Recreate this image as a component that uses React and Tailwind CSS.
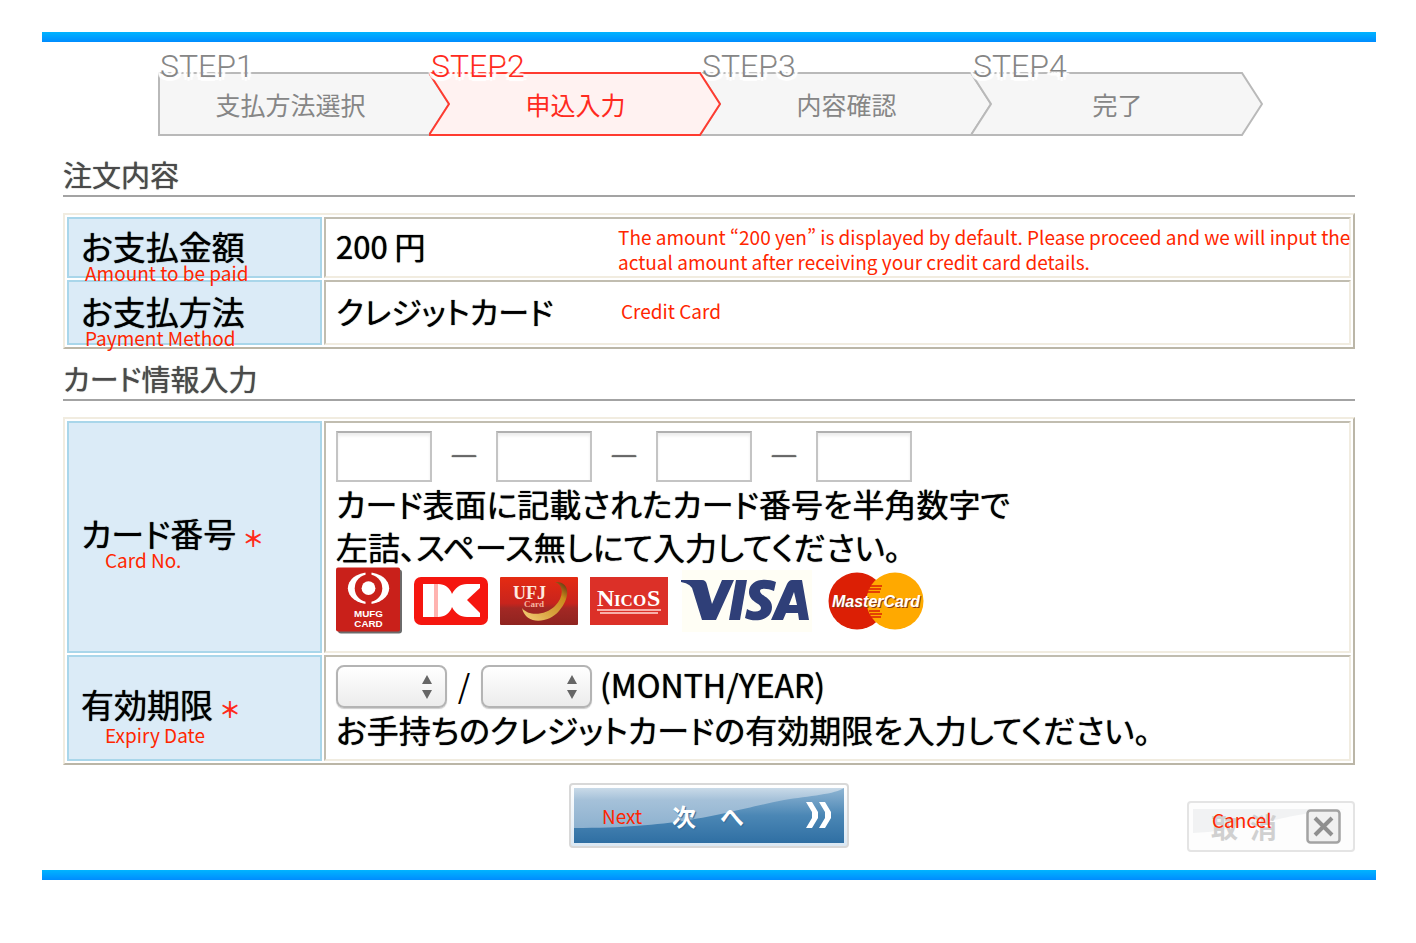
import React from 'react';
import clsx from 'clsx';

const STEPS = [
    { id: 1, label: '支払方法選択' },
    { id: 2, label: '申込入力', active: true },
    { id: 3, label: '内容確認' },
    { id: 4, label: '完了' }
];

const Step = ({ step }) => {
    const shape = step.id === 1
        ? 'M1 1H271L291 32L271 63H1Z'
        : 'M0 1H271L291 32L271 63H0L20 32Z';

    return (
        <li
            aria-current={step.active ? 'step' : undefined}
            className={clsx('relative w-[271px] h-[84px] shrink-0', step.active ? 'z-10 text-[#ff2a20]' : 'text-[#868686]')}
        >
            <svg className="absolute left-0 bottom-0 w-[292px] h-16" viewBox="0 0 292 64" fill="none">
                <path
                    d={shape}
                    fill={step.active ? '#fff2f1' : '#f6f6f6'}
                    stroke={step.active ? '#ff3b30' : '#b9b9b9'}
                    strokeWidth="2"
                />
            </svg>
            <div className="relative flex flex-col h-full">
                <span className="pl-0.5 h-[34px] font-[Roboto,sans-serif] font-light text-[32px] leading-7 [text-shadow:0_4px_1px_#fff,3px_3px_1px_#fff,-3px_3px_1px_#fff,4px_0_1px_#fff,-4px_0_1px_#fff,0_-2px_1px_#fff]">
                    STEP{step.id}
                </span>
                <span className={clsx('text-center text-[25px] leading-9', step.id === 1 ? 'pr-1.5' : 'pl-[22px]')}>
                    {step.label}
                </span>
            </div>
        </li>
    );
};

const SectionTitle = ({ children }) => (
    <h2 className="h-[43px] border-b-2 border-[#a3a3a3] text-[29px] leading-10 text-[#4a4a4a] [text-shadow:0_0_1px_#4a4a4a] [font-feature-settings:'palt']">
        {children}
    </h2>
);

const Note = ({ className, children }) => (
    <span className={clsx('text-[19px] leading-[25px] text-[#ff2600] text-shadow-none', className)}>{children}</span>
);

const FormTable = ({ children }) => (
    <table className="mt-4 w-full table-fixed border-separate border-spacing-[2px] border-2 border-t-[#f1ece0] border-l-[#f1ece0] border-r-[#bbb6a7] border-b-[#bbb6a7] text-black [text-shadow:0_0_1px_#000] [font-feature-settings:'palt']">
        <tbody>{children}</tbody>
    </table>
);

const Row = ({ label, note, noteClass, required, height, children }) => (
    <tr className={height}>
        <th scope="row" className="w-[255px] border-2 border-[#a9d6ea] bg-[#dbebf7] pl-3 pb-1 text-left align-middle text-[33px] font-normal">
            <div className="relative leading-9 whitespace-nowrap">
                {label}
                {required && <span className="ml-2 text-[22px] text-[#ff2a1a] font-bold text-shadow-none">＊</span>}
                <Note className={clsx('absolute whitespace-nowrap', noteClass)}>{note}</Note>
            </div>
        </th>
        <td className="border-2 border-t-[#c1bdb0] border-l-[#c1bdb0] border-r-[#f1ece0] border-b-[#f1ece0] pl-2.5 align-middle text-[32px]">
            {children}
        </td>
    </tr>
);

const DateSelect = ({ label, options }) => (
    <span className="relative inline-block">
        <select
            aria-label={label}
            defaultValue=""
            className="block w-[111px] h-[43px] appearance-none rounded-lg border-2 border-[#b4b4b4] bg-linear-to-b from-white to-[#ececec] px-3 text-xl shadow-[0_1px_1px_#ccc]"
        >
            <option value=""></option>
            {options.map((o) => <option key={o}>{o}</option>)}
        </select>
        <svg className="pointer-events-none absolute right-3.5 top-2.5 w-3 h-6" viewBox="0 0 12 24" fill="#666">
            <path d="M6 0L11 9H1ZM6 24L11 15H1Z" />
        </svg>
    </span>
);

const CardLogos = () => (
    <div className="flex items-center gap-3 h-[66px] text-shadow-none">
        <svg className="w-[66px] h-[67px]" viewBox="0 0 67 67" role="img" aria-label="MUFG CARD">
            <rect x="2" y="2" width="65" height="65" rx="3" fill="#6b6b6b" />
            <rect width="65" height="65" rx="2" fill="#c9201a" />
            <ellipse cx="33" cy="21" rx="21" ry="16" fill="#fff" />
            <circle cx="33" cy="21" r="14" fill="#c9201a" />
            <path d="M30 4h6v4h-6zM30 34h6v4h-6z" fill="#c9201a" />
            <circle cx="33" cy="21" r="7" fill="#fff" />
            <text x="33" y="50" textAnchor="middle" fill="#fff" fontFamily="Liberation Sans" fontWeight="bold" fontSize="10">MUFG</text>
            <text x="33" y="60" textAnchor="middle" fill="#fff" fontFamily="Liberation Sans" fontWeight="bold" fontSize="10">CARD</text>
        </svg>
        <svg className="w-[74px] h-12" viewBox="0 0 74 48" role="img" aria-label="DC">
            <rect width="74" height="48" rx="7" fill="#f5160f" />
            <path d="M9 7H20V40H9Z" fill="#fff" />
            <path d="M20 7H24V40H20Z" fill="#ffb3b0" />
            <path d="M24 7C31 7 36 11 38 17C41 11 46 7 53 7H66V40H53C46 40 41 36 38 30C36 36 31 40 24 40Z" fill="#fff" />
            <path d="M67 10L53 23L67 37Z" fill="#f5160f" />
        </svg>
        <svg className="w-[78px] h-12" viewBox="0 0 78 48" role="img" aria-label="UFJ Card">
            <defs>
                <linearGradient id="ufj" x2="0" y2="1">
                    <stop offset="0" stopColor="#e52b12" />
                    <stop offset=".55" stopColor="#c8241d" />
                    <stop offset=".65" stopColor="#a32824" />
                    <stop offset="1" stopColor="#8f2420" />
                </linearGradient>
                <linearGradient id="ufjGold" x1="0" x2="1" y1="1" y2="0">
                    <stop offset="0" stopColor="#f6d27c" />
                    <stop offset=".4" stopColor="#d9a441" />
                    <stop offset=".75" stopColor="#c98a1c" />
                    <stop offset="1" stopColor="#4f2510" />
                </linearGradient>
            </defs>
            <rect width="78" height="48" rx="1" fill="url(#ufj)" />
            <path d="M22 31C26 49 49 46 59 34C71 20 70 4 55 5C64 8 64 20 55 29C46 38 29 40 22 31Z" fill="url(#ufjGold)" />
            <text x="13" y="22" fill="#ffe9df" fontFamily="Liberation Serif" fontWeight="bold" fontSize="18">UFJ</text>
            <text x="24" y="30" fill="#f5b5a0" fontFamily="Liberation Serif" fontWeight="bold" fontSize="9">Card</text>
        </svg>
        <svg className="w-[78px] h-12" viewBox="0 0 78 48" role="img" aria-label="NICOS">
            <rect width="78" height="48" fill="#dc3028" />
            <text x="7" y="29" fill="#fff" fontFamily="Liberation Serif" fontWeight="bold" fontSize="24">N</text>
            <text x="24" y="29" fill="#fff" fontFamily="Liberation Serif" fontWeight="bold" fontSize="17">ICO</text>
            <text x="57" y="29" fill="#fff" fontFamily="Liberation Serif" fontWeight="bold" fontSize="24">S</text>
            <path d="M7 33H71M10 36H68" stroke="#ffd9d5" strokeWidth="1.5" />
        </svg>
        <svg className="w-[132px] h-[62px]" viewBox="0 0 132 62" role="img" aria-label="VISA">
            <rect x="2" width="130" height="62" fill="#fffef5" />
            <g fill="#2f3f78">
                <path d="M1 10H22Q26 10 27 15L32 34L42 10H54L36 50H22L13 21Q12 14 1 12Z" />
                <path d="M56 10H67L60 50H49Z" />
                <path d="M96 12L94 21C87 18 80 18 80 21C80 26 92 27 92 37C92 50 76 53 65 48L67 39C74 43 81 42 81 38C81 33 69 32 69 22C69 10 84 7 96 12Z" />
                <path fillRule="evenodd" d="M112 10H122L129 50H119L118 43H106L103 50H91L107 14Q109 10 112 10ZM114 22L109 35H117Z" />
            </g>
        </svg>
        <svg className="ml-1 w-24 h-[58px]" viewBox="0 0 96 58" role="img" aria-label="MasterCard">
            <circle cx="29" cy="29" r="28.5" fill="#dc1f05" />
            <circle cx="67" cy="29" r="28.5" fill="#ffa900" />
            <path d="M42 14H54M41 17H53M39 20H52M42 42H54M43 45H53M41 39H52" stroke="#dc1f05" strokeWidth="1.6" />
            <text x="49" y="36" textAnchor="middle" fill="#8a3a1a" fontFamily="Liberation Sans" fontWeight="bold" fontStyle="italic" fontSize="16">MasterCard</text>
            <text x="48" y="35" textAnchor="middle" fill="#fff" fontFamily="Liberation Sans" fontWeight="bold" fontStyle="italic" fontSize="16">MasterCard</text>
        </svg>
    </div>
);

const NextButton = () => (
    <button type="button" className="relative w-[280px] h-[65px] rounded border-2 border-[#d8d8d8] bg-linear-to-b from-white to-[#dbe8f3] p-[3px]">
        <span className="relative flex items-center h-full overflow-hidden bg-linear-to-b from-[#8fb5d3] via-[#4b87b5] to-[#2f6fa3]">
            <svg className="absolute inset-0 w-full h-full" viewBox="0 0 270 55" preserveAspectRatio="none">
                <defs>
                    <linearGradient id="gloss" x2="0" y2="1">
                        <stop offset="0" stopColor="#c9dae8" />
                        <stop offset=".3" stopColor="#a5c1d9" />
                        <stop offset="1" stopColor="#8db1cf" />
                    </linearGradient>
                </defs>
                <path d="M0 0H270C262 6 235 8 210 12C150 24 110 40 0 40Z" fill="url(#gloss)" />
            </svg>
            <Note className="relative ml-7 w-[70px] text-left">Next</Note>
            <span className="relative flex gap-6 text-2xl leading-8 font-bold text-white [text-shadow:1px_1px_1px_#2f6a99]">
                <span>次</span>
                <span>へ</span>
            </span>
            <svg className="absolute right-3 top-3.5 w-[26px] h-[26px]" viewBox="0 0 26 26" fill="#fff">
                <path d="M0 0H6L12 10V16L6 26H0L6 16V10Z" />
                <path d="M13 0H19L25 10V16L19 26H13L19 16V10Z" />
            </svg>
        </span>
    </button>
);

const CancelButton = () => (
    <button type="button" className="relative flex items-center w-[168px] h-[51px] rounded border-2 border-[#e4e4e4] bg-[#fdfdfd] pl-[22px]">
        <svg className="absolute left-1 top-1.5 w-[152px] h-6" viewBox="0 0 152 24" preserveAspectRatio="none">
            <path d="M0 0H152C110 3 90 10 60 15C40 20 20 23 0 24Z" fill="#f1f2f3" />
        </svg>
        <span className="relative flex gap-3 text-[27px] leading-8 font-bold text-[#d0d0d0]">
            <span>取</span>
            <span>消</span>
        </span>
        <Note className="absolute left-[23px] top-1">Cancel</Note>
        <svg className="absolute right-3 top-1.5 w-[35px] h-[35px]" viewBox="0 0 35 35" fill="none">
            <rect x="1.5" y="1.5" width="32" height="32" rx="3" fill="#f0f0f0" stroke="#a3a3a3" strokeWidth="2.5" />
            <path d="M9 9L26 26M26 9L9 26" stroke="#8f8f8f" strokeWidth="4" />
        </svg>
    </button>
);

const App = () => {
    const months = Array.from({ length: 12 }, (_, i) => i + 1);
    const years = Array.from({ length: 10 }, (_, i) => 2012 + i);

    return (
        <main lang="ja" className="ml-[42px] mr-10 pt-8 font-['Noto_Sans_CJK_JP',sans-serif]">
            <div className="h-2.5 bg-linear-to-b from-[#00b4ff] to-[#008cff]" />

            <ol className="mt-2.5 flex justify-center pl-[3px] pr-[21px]">
                {STEPS.map((step) => <Step key={step.id} step={step} />)}
            </ol>

            <form className="mx-[21px]" onSubmit={(e) => e.preventDefault()}>
                <section className="mt-[18px]">
                    <SectionTitle>注文内容</SectionTitle>
                    <FormTable>
                        <Row label="お支払金額" note="Amount to be paid" noteClass="left-1 top-8" height="h-[61px]">
                            <div className="flex items-center h-[50px]">
                                <span className="w-[282px] shrink-0 pb-1 text-[31px] leading-9">200 円</span>
                                <Note className="pt-[3px] whitespace-nowrap">
                                    The amount “200 yen” is displayed by default. Please proceed and we will input the
                                    <br />
                                    actual amount after receiving your credit card details.
                                </Note>
                            </div>
                        </Row>
                        <Row label="お支払方法" note="Payment Method" noteClass="left-1 top-8" height="h-[65px]">
                            <div className="flex items-center pb-1">
                                <span className="w-[285px] shrink-0 text-[31px] leading-9">クレジットカード</span>
                                <Note>Credit Card</Note>
                            </div>
                        </Row>
                    </FormTable>
                </section>

                <section className="mt-[9px]">
                    <SectionTitle>カード情報入力</SectionTitle>
                    <FormTable>
                        <Row label="カード番号" note="Card No." noteClass="left-6 top-8" required height="h-[232px]">
                            <div className="pb-2.5">
                                <div className="flex items-center">
                                    {[1, 2, 3, 4].map((n) => (
                                        <React.Fragment key={n}>
                                            {n > 1 && <span className="mx-3.5 w-9 pb-1 text-center text-2xl leading-8 text-[#666] font-['Liberation_Sans',sans-serif]">—</span>}
                                            <input
                                                type="text"
                                                maxLength={4}
                                                aria-label={`カード番号 ${n}`}
                                                className="w-24 h-[51px] border-2 border-[#c4c4c4] border-t-[#b0b0b0] bg-white px-2 text-2xl shadow-[inset_0_3px_3px_#eee]"
                                            />
                                        </React.Fragment>
                                    ))}
                                </div>
                                <p className="leading-[43px] whitespace-nowrap">
                                    カード表面に記載されたカード番号を半角数字で
                                    <br />
                                    左詰、スペース無しにて入力してください。
                                </p>
                                <CardLogos />
                            </div>
                        </Row>
                        <Row label="有効期限" note="Expiry Date" noteClass="left-6 top-9" required height="h-[106px]">
                            <div className="flex items-center">
                                <DateSelect label="Month" options={months} />
                                <span className="w-[34px] pb-1 text-center leading-[39px] text-shadow-none">/</span>
                                <DateSelect label="Year" options={years} />
                                <span className="ml-2 pb-1 leading-[39px]">(MONTH/YEAR)</span>
                            </div>
                            <p className="leading-[43px] whitespace-nowrap">お手持ちのクレジットカードの有効期限を入力してください。</p>
                        </Row>
                    </FormTable>
                </section>

                <div className="mt-[18px] grid grid-cols-[1fr_auto_1fr] items-start">
                    <div className="col-start-2">
                        <NextButton />
                    </div>
                    <div className="mt-[18px] justify-self-end">
                        <CancelButton />
                    </div>
                </div>
            </form>

            <div className="mt-[18px] h-2.5 bg-linear-to-b from-[#00b4ff] to-[#008cff]" />
        </main>
    );
};

export default App;
